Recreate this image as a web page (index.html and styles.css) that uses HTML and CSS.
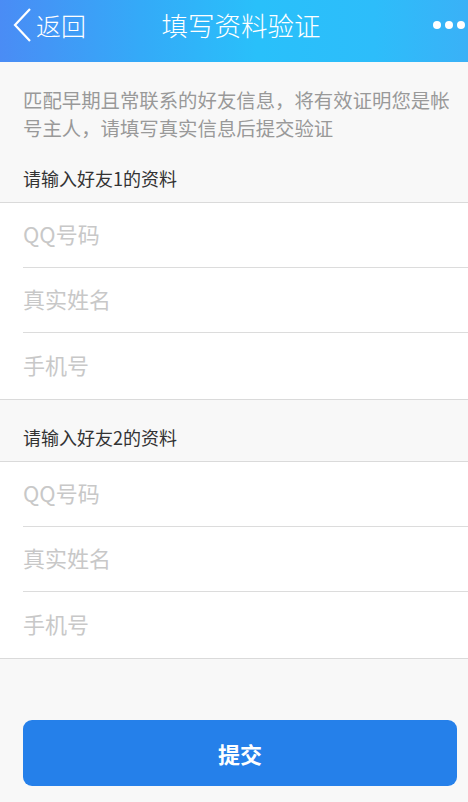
FILE: index.html
```html
<!DOCTYPE html>
<html lang="zh-CN">
<head>
<meta charset="utf-8">
<title>填写资料验证</title>
<link rel="stylesheet" href="styles.css">
</head>
<body>
<div class="page">
  <header class="topbar">
    <div class="back">
      <svg class="chev" width="20" height="34" viewBox="0 0 20 34"><polyline points="17,1 2,17 17,33" fill="none" stroke="#fff" stroke-width="2.2" stroke-linejoin="miter"/></svg>
      <span class="back-text">返回</span>
    </div>
    <div class="title">填写资料验证</div>
    <div class="more"><i></i><i></i><i></i></div>
  </header>

  <p class="intro">匹配早期且常联系的好友信息，将有效证明您是帐号主人，请填写真实信息后提交验证</p>

  <div class="section-title first">请输入好友1的资料</div>
  <div class="group">
    <div class="row">QQ号码</div>
    <div class="row">真实姓名</div>
    <div class="row last">手机号</div>
  </div>

  <div class="section-title">请输入好友2的资料</div>
  <div class="group">
    <div class="row">QQ号码</div>
    <div class="row">真实姓名</div>
    <div class="row last">手机号</div>
  </div>

  <div class="actions">
    <button class="submit">提交</button>
  </div>
</div>
</body>
</html>
```

FILE: styles.css
```css
html, body {
  margin: 0;
  padding: 0;
  background: #f8f8f8;
}
body {
  font-family: "Noto Sans CJK SC", "Noto Sans", "Liberation Sans", sans-serif;
  width: 468px;
  height: 802px;
  overflow: hidden;
}
.page {
  display: flex;
  flex-direction: column;
}
.topbar {
  height: 62px;
  box-sizing: border-box;
  padding: 0 3px 12px 13px;
  display: flex;
  align-items: center;
  color: #fff;
  background: linear-gradient(90deg, #4a8cf5 0%, #34aaf8 30%, #29c0fa 55%, #2dbdfa 80%, #3ab1f7 100%);
}
.back {
  display: flex;
  align-items: center;
  width: 110px;
}
.chev {
  display: block;
}
.back-text {
  font-size: 25px;
  line-height: 30px;
  margin-left: 3px;
  font-weight: 300;
}
.title {
  flex: 1;
  text-align: center;
  font-size: 26.5px;
  line-height: 30px;
  padding-left: 4px;
  font-weight: 300;
}
.more {
  width: 110px;
  display: flex;
  justify-content: flex-end;
  gap: 4px;
}
.more i {
  display: block;
  width: 8px;
  height: 8px;
  border-radius: 50%;
  background: #fff;
}
.intro {
  margin: 0;
  padding: 24px 0 0 23px;
  width: 434px;
  font-size: 19.4px;
  line-height: 28px;
  color: #999;
}
.section-title {
  padding: 25px 23px 12px;
  font-size: 18px;
  line-height: 24px;
  color: #333;
}
.section-title.first {
  padding-top: 24px;
}
.group {
  background: #fff;
  border-top: 1px solid #dadada;
  border-bottom: 1px solid #dadada;
  padding-left: 23px;
}
.row {
  height: 65px;
  box-sizing: border-box;
  padding-bottom: 5px;
  display: flex;
  align-items: center;
  font-size: 22px;
  color: #c8c8c8;
  border-bottom: 1px solid #dcdcdc;
}
.row.last {
  border-bottom: none;
  height: 66px;
}
.actions {
  padding: 61px 11px 0 23px;
}
.submit {
  display: block;
  width: 100%;
  height: 66px;
  border: none;
  border-radius: 9px;
  background: #2580ea;
  color: #fff;
  font-family: inherit;
  font-size: 22px;
  font-weight: bold;
}
```
